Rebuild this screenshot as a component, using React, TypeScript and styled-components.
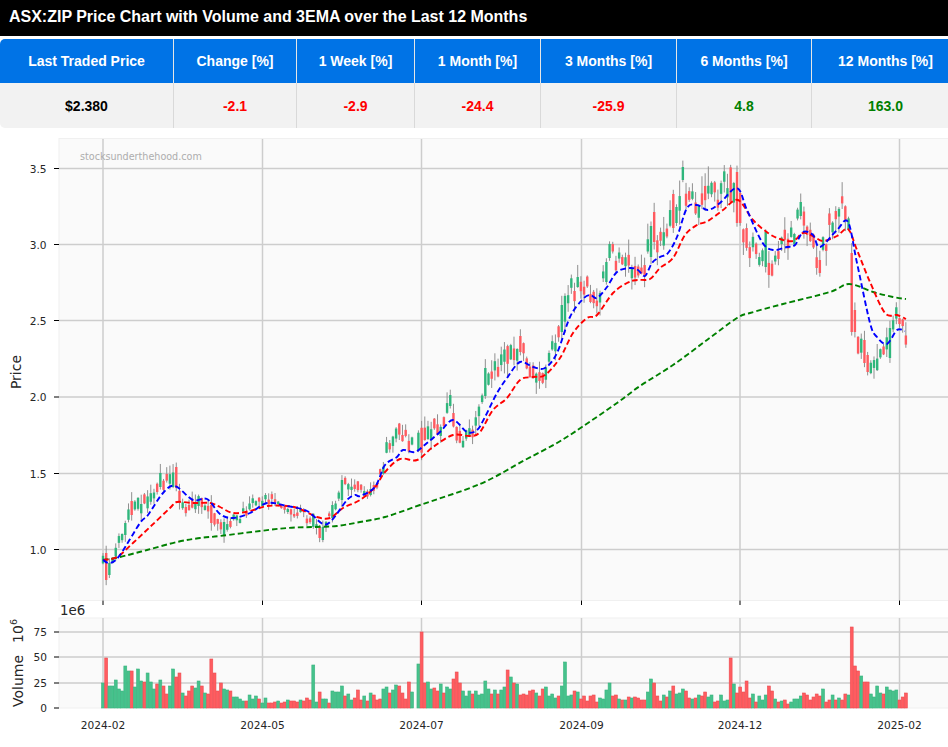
import React from 'react';
import styled, { createGlobalStyle } from 'styled-components';

const GlobalStyle = createGlobalStyle`
  html, body {
    margin: 0;
    padding: 0;
    background: #fff;
    overflow: hidden;
    font-family: "Liberation Sans", Arial, sans-serif;
  }
`;

const Page = styled.div`
  display: flex;
  flex-direction: column;
  width: 948px;
  height: 747px;
  overflow: hidden;
`;

const Title = styled.h1`
  margin: 0 0 3px;
  height: 36px;
  padding: 0 0 3px 9px;
  box-sizing: border-box;
  background: #000;
  color: #fff;
  font-size: 16px;
  font-weight: 700;
  line-height: 33px;
  letter-spacing: -0.01px;
`;

const TableClip = styled.div`
  width: 948px;
  height: 89px;
  overflow: hidden;
  flex: none;
`;

const StatsTable = styled.table`
  width: 959px;
  height: 89px;
  border-collapse: separate;
  border-spacing: 0;
  table-layout: fixed;
  border-radius: 5px 0 0 5px;
  overflow: hidden;
  font-size: 14px;
  font-weight: 700;
`;

const StatsCol = styled.col<{ $width: number }>`
  width: ${(p) => p.$width}px;
`;

const HeadCell = styled.th`
  height: 44px;
  padding: 0;
  background: #0073e6;
  color: #fff;
  text-align: center;
  border-right: 1px solid #e6e6e6;
  &:last-child {
    border-right: none;
  }
`;

const ValueCell = styled.td<{ $tone: string }>`
  height: 45px;
  padding: 0;
  background: #f2f2f2;
  color: ${(p) => p.$tone};
  text-align: center;
  border-right: 1px solid #d9d9d9;
  &:last-child {
    border-right: none;
  }
`;

const PriceSvg = styled.svg`
  display: block;
  width: 948px;
  height: 476px;
  overflow: visible;
`;

const VolumeSvg = styled.svg`
  display: block;
  width: 948px;
  height: 143px;
`;

const AxesBg = styled.rect`
  fill: #fafafa;
  stroke: #f0f0f0;
  stroke-width: 1;
`;

const GridLine = styled.line`
  stroke: #cdcdcd;
  stroke-width: 1.5;
`;

const TickMark = styled.line`
  stroke: #000;
  stroke-width: 1;
`;

const TickLabel = styled.text`
  font-family: "DejaVu Sans", sans-serif;
  font-size: 10.6px;
  fill: #262626;
`;

const AxisTitle = styled.text`
  font-family: "DejaVu Sans", sans-serif;
  font-size: 14px;
  fill: #262626;
`;

const Multiplier = styled(AxisTitle)`
  font-size: 13.4px;
`;

const Watermark = styled.text`
  font-family: "DejaVu Sans", sans-serif;
  font-size: 9.6px;
  fill: #adadad;
`;

const Wick = styled.line`
  stroke: #8f8f8f;
  stroke-width: 1;
`;

const Body = styled.rect<{ $up: boolean }>`
  fill: ${(p) => (p.$up ? '#2fb67c' : '#ff5a5f')};
`;

const VolumeBar = styled.rect<{ $up: boolean }>`
  fill: ${(p) => (p.$up ? '#46c28c' : '#ff5c60')};
  stroke: ${(p) => (p.$up ? '#38b47e' : '#ec4c50')};
  stroke-width: 0.6;
`;

const EmaLine = styled.path<{ $color: string }>`
  fill: none;
  stroke: ${(p) => p.$color};
  stroke-width: 1.9;
  stroke-dasharray: 5.6 3;
`;

const columns = [
  { label: 'Last Traded Price', value: '$2.380', tone: '#000', width: 174 },
  { label: 'Change [%]', value: '-2.1', tone: '#f00', width: 123 },
  { label: '1 Week [%]', value: '-2.9', tone: '#f00', width: 118 },
  { label: '1 Month [%]', value: '-24.4', tone: '#f00', width: 126 },
  { label: '3 Months [%]', value: '-25.9', tone: '#f00', width: 136 },
  { label: '6 Months [%]', value: '4.8', tone: 'green', width: 135 },
  { label: '12 Months [%]', value: '163.0', tone: 'green', width: 147 },
];

// volume in millions, positive = up day, negative = down day, 0 = no bar
const volumes = [
  25, -50, 22, 22, 28, 19, 17, 42, 37, -37, 21, 39, 27, -26, 35, 26, 19, -24, 28, -22, -14, 22, 39, -31, -35, 15,
  -12, -17, -22, 20, 27, -22, 15, -14, -49, -35, -17, -25, 19, 18, -17, 11, 11, 9, 7, -7, 13, 9, 12, -9, 5, 10, -5,
  -5, -6, 7, -5, -6, 8, -7, -7, -6, 8, -7, -10, -8, 43, 6, -16, 9, 9, -5, 17, 16, 16, 22, -12, 14, 8, -10, -18, -8,
  12, -7, 15, -13, -8, -9, 19, 21, -15, 18, 23, -22, -15, -9, -26, 16, 0, 44, -76, -25, 26, 19, -20, -17, 24, -15,
  21, 19, -29, -36, -25, 17, 12, 17, -14, 17, 13, 14, 27, 19, -14, 18, -14, 18, 21, -38, 31, -25, 24, -13, -14, -13,
  -17, -18, 15, -12, -19, 21, 12, 14, 10, -12, 22, 46, 12, 13, -17, 16, -9, -12, -7, -12, -13, -6, 10, 9, 18, 25,
  -12, -13, 9, -8, 8, -11, 10, -11, -10, -8, -8, 16, 29, -25, -12, -7, 13, -11, 17, -22, 14, 15, 19, -17, -10, 9,
  -10, 13, -12, -16, 11, 13, -6, -7, 13, 7, 8, -50, 24, -15, -21, -16, -27, -10, 14, -6, 12, 8, 13, -22, -17, 9, -6,
  7, -8, -4, 6, 9, 9, 12, -15, -13, -8, -11, -14, -12, 19, -6, -8, 13, -8, 10, -8, -14, 13, -81, -42, -37, 32, -26,
  -26, 14, 11, 22, 15, -14, 21, 18, 17, 18, -8, -11, -15,
];

type Pt = [number, number];

const pricePath: Pt[] = [
  [103, 563], [107, 567], [112, 566], [116, 547], [122, 533], [127, 517], [131, 510], [138, 508], [150, 497],
  [160, 480], [172, 478], [177, 480], [180, 507], [190, 508], [198, 498], [212, 513], [222, 530], [232, 522],
  [245, 513], [258, 500], [268, 498], [285, 507], [295, 515], [305, 515], [315, 527], [322, 533], [332, 512],
  [343, 485], [355, 488], [362, 490], [372, 495], [380, 478], [387, 450], [395, 430], [403, 433], [410, 450],
  [420, 437], [432, 430], [445, 422], [450, 402], [456, 430], [463, 443], [472, 433], [480, 412], [486, 383],
  [495, 373], [505, 363], [515, 347], [522, 347], [528, 363], [537, 380], [545, 370], [552, 343], [562, 330],
  [566, 297], [575, 287], [585, 280], [595, 300], [600, 297], [607, 267], [612, 253], [622, 263], [632, 267],
  [643, 280], [650, 240], [655, 250], [660, 247], [670, 227], [675, 207], [683, 187], [690, 193], [700, 207],
  [710, 200], [720, 190], [730, 182], [737, 180], [740, 210], [745, 243], [752, 250], [762, 263], [770, 263],
  [778, 257], [785, 240], [795, 233], [800, 210], [805, 230], [815, 253], [820, 263], [825, 240], [835, 217],
  [845, 207], [848, 210], [851, 292], [855, 320], [858, 350], [863, 347], [868, 363], [875, 363], [880, 355],
  [885, 353], [890, 340], [895, 317], [900, 320], [903, 327], [906, 342],
];

// candles that stand out in the chart: [x, top, bottom, up]
const notable: [number, number, number, boolean][] = [
  [107, 553, 580, false], [109, 563, 575, true], [125, 523, 535, true], [132, 501, 515, false],
  [160, 473, 487, true], [177, 467, 488, false], [212, 505, 523, false], [224, 522, 535, true],
  [320, 527, 538, false], [323, 527, 540, true], [332, 505, 518, true], [342, 480, 500, true],
  [450, 395, 406, true], [485, 368, 396, true], [520, 336, 352, false], [562, 305, 332, true],
  [607, 262, 282, true], [610, 244, 258, true], [650, 226, 257, true], [655, 212, 242, false],
  [673, 194, 228, false], [677, 207, 223, true], [683, 167, 180, true], [737, 172, 223, false],
  [740, 193, 223, false], [767, 232, 267, true], [800, 202, 216, true], [820, 260, 273, false],
  [851, 253, 332, false], [854, 310, 332, false], [864, 340, 363, false], [868, 355, 372, false],
  [890, 328, 358, true],
];

const emaBlue: Pt[] = [
  [103, 560], [110, 563], [120, 555], [140, 523], [148, 515], [163, 493], [175, 486], [193, 500], [207, 499],
  [220, 514], [233, 518], [250, 513], [267, 503], [287, 506], [307, 511], [323, 524], [332, 520], [347, 500],
  [355, 495], [360, 496], [375, 487], [385, 465], [397, 457], [403, 450], [415, 452], [427, 443], [440, 432],
  [453, 420], [467, 432], [477, 430], [485, 417], [497, 393], [507, 378], [520, 362], [533, 367], [545, 368],
  [557, 353], [570, 317], [582, 300], [590, 295], [597, 298], [607, 287], [617, 272], [630, 268], [638, 270],
  [645, 276], [652, 263], [660, 257], [668, 253], [677, 237], [687, 208], [697, 205], [708, 210], [720, 203],
  [737, 188], [747, 210], [762, 242], [773, 250], [787, 247], [795, 245], [803, 232], [813, 235], [820, 247],
  [837, 230], [848, 222], [857, 263], [870, 323], [877, 337], [887, 344], [897, 330], [905, 331],
];

const emaRed: Pt[] = [
  [103, 560], [117, 557], [133, 543], [150, 527], [170, 508], [177, 502], [193, 503], [210, 503], [220, 507],
  [233, 513], [250, 511], [267, 506], [287, 506], [300, 509], [317, 517], [330, 518], [343, 508], [360, 500],
  [375, 487], [385, 472], [400, 459], [417, 460], [433, 447], [453, 435], [470, 436], [480, 432], [493, 410],
  [507, 398], [520, 380], [533, 377], [545, 375], [560, 358], [573, 333], [587, 318], [597, 315], [613, 293],
  [627, 283], [637, 280], [650, 279], [660, 268], [673, 258], [685, 235], [697, 225], [708, 221], [723, 210],
  [738, 200], [753, 220], [768, 233], [780, 239], [793, 241], [803, 233], [813, 236], [823, 241], [837, 236],
  [848, 229], [857, 250], [870, 282], [885, 313], [897, 315], [906, 319],
];

const emaGreen: Pt[] = [
  [103, 560], [120, 557], [147, 550], [177, 542], [200, 538], [220, 536], [260, 531], [287, 528], [313, 527],
  [337, 526], [360, 522], [385, 517], [420, 505], [480, 484], [525, 460], [557, 443], [582, 427], [617, 403],
  [640, 386], [673, 365], [707, 340], [737, 318], [750, 313], [783, 304], [830, 292], [849, 284], [873, 292],
  [893, 297], [906, 299],
];

// catmull-rom through the traced points, the EMAs are smooth curves
const toCurve = (pts: Pt[]) => {
  let d = `M${pts[0][0]} ${pts[0][1]}`;
  for (let i = 0; i < pts.length - 1; i++) {
    const p0 = pts[Math.max(i - 1, 0)];
    const p1 = pts[i];
    const p2 = pts[i + 1];
    const p3 = pts[Math.min(i + 2, pts.length - 1)];
    const c1x = p1[0] + (p2[0] - p0[0]) / 6;
    const c1y = p1[1] + (p2[1] - p0[1]) / 6;
    const c2x = p2[0] - (p3[0] - p1[0]) / 6;
    const c2y = p2[1] - (p3[1] - p1[1]) / 6;
    d += `C${c1x.toFixed(1)} ${c1y.toFixed(1)} ${c2x.toFixed(1)} ${c2y.toFixed(1)} ${p2[0]} ${p2[1]}`;
  }
  return d;
};

const pathY = (x: number) => {
  for (let i = 1; i < pricePath.length; i++) {
    if (x <= pricePath[i][0]) {
      const [x0, y0] = pricePath[i - 1];
      const [x1, y1] = pricePath[i];
      return y0 + ((y1 - y0) * (x - x0)) / (x1 - x0);
    }
  }
  return pricePath[pricePath.length - 1][1];
};

// small repeatable noise so the candles stay the same on every render
let seed = 41;
const rand = () => {
  seed = (seed * 16807) % 2147483647;
  return (seed % 1000) / 1000;
};

const barX = (i: number) => 103 + i * 3.186;

const candles = volumes.map((v, i) => {
  const x = barX(i);
  const scale = 0.6 + (560 - pathY(x)) / 330;
  const mid = pathY(x) + (rand() - 0.5) * 14 * scale;
  const height = (1 + rand() * 4 + Math.abs(v) * 0.32) * scale;
  const top = mid - height / 2;
  const up = rand();
  const down = rand();
  const candle = {
    x,
    up: v > 0,
    top,
    height,
    high: top - (0.5 + up * up * 12) * scale,
    low: top + height + (0.5 + down * down * 10) * scale,
    skip: v === 0,
  };
  const known = notable.find((n) => Math.round((n[0] - 103) / 3.186) === i);
  if (known) {
    candle.top = known[1];
    candle.height = known[2] - known[1];
    candle.up = known[3];
    candle.high = known[1] - 2 - up * 8;
    candle.low = known[2] + 2 + down * 6;
  }
  return candle;
});

const gridX = [103, 262.5, 421.5, 581.5, 740, 899.5];
const priceTicks: [string, number][] = [
  ['3.5', 168.5], ['3.0', 244.5], ['2.5', 320.5], ['2.0', 397], ['1.5', 473.5], ['1.0', 549.5],
];
const volumeTicks: [string, number][] = [['75', 632], ['50', 657], ['25', 683], ['0', 708]];
const dateLabels = ['2024-02', '2024-05', '2024-07', '2024-09', '2024-12', '2025-02'];

function PriceChart() {
  return (
    <PriceSvg viewBox="0 128 948 476">
      <AxesBg x={59} y={138.5} width={900} height={462} />
      {gridX.map((x) => (
        <GridLine key={x} x1={x} x2={x} y1={139} y2={600} />
      ))}
      {priceTicks.map(([label, y]) => (
        <g key={label}>
          <GridLine x1={59} x2={948} y1={y} y2={y} />
          <TickMark x1={54} x2={59} y1={y} y2={y} />
          <TickLabel x={46.5} y={y + 4} textAnchor="end">{label}</TickLabel>
        </g>
      ))}
      {gridX.map((x) => (
        <TickMark key={x} x1={x} x2={x} y1={600.5} y2={605} />
      ))}
      <Watermark x={80} y={160}>stocksunderthehood.com</Watermark>
      <AxisTitle transform="translate(21 372) rotate(-90)" textAnchor="middle">Price</AxisTitle>
      {candles.map((c) =>
        c.skip ? null : (
          <g key={c.x}>
            <Wick x1={c.x} x2={c.x} y1={c.high} y2={c.low} />
            <Body $up={c.up} x={c.x - 1.2} y={c.top} width={2.4} height={c.height} />
          </g>
        ),
      )}
      <EmaLine $color="green" d={toCurve(emaGreen)} />
      <EmaLine $color="#f00" d={toCurve(emaRed)} />
      <EmaLine $color="#00f" d={toCurve(emaBlue)} />
    </PriceSvg>
  );
}

function VolumeChart() {
  return (
    <VolumeSvg viewBox="0 604 948 143">
      <AxesBg x={59} y={618} width={900} height={90} />
      {gridX.map((x) => (
        <GridLine key={x} x1={x} x2={x} y1={618} y2={708} />
      ))}
      {volumeTicks.map(([label, y]) => (
        <g key={label}>
          {label !== '0' && <GridLine x1={59} x2={948} y1={y} y2={y} />}
          <TickMark x1={54} x2={59} y1={y} y2={y} />
          <TickLabel x={47} y={y + 4} textAnchor="end">{label}</TickLabel>
        </g>
      ))}
      <Multiplier x={60} y={615}>1e6</Multiplier>
      <AxisTitle transform="translate(23 707) rotate(-90)">
        Volume<tspan dx={12}>10</tspan><tspan dx={0} dy={-6} fontSize={9.5}>6</tspan>
      </AxisTitle>
      {volumes.map((v, i) =>
        v === 0 ? null : (
          <VolumeBar key={i} $up={v > 0} x={barX(i) - 1.45} y={708 - Math.abs(v)} width={2.9} height={Math.abs(v)} />
        ),
      )}
      {dateLabels.map((label, i) => (
        <TickLabel key={label} x={gridX[i]} y={729} textAnchor="middle">{label}</TickLabel>
      ))}
    </VolumeSvg>
  );
}

export default function App() {
  return (
    <Page>
      <GlobalStyle />
      <Title>ASX:ZIP Price Chart with Volume and 3EMA over the Last 12 Months</Title>
      <TableClip>
        <StatsTable>
          <colgroup>
            {columns.map((c) => (
              <StatsCol key={c.label} $width={c.width} />
            ))}
          </colgroup>
          <thead>
            <tr>
              {columns.map((c) => (
                <HeadCell key={c.label}>{c.label}</HeadCell>
              ))}
            </tr>
          </thead>
          <tbody>
            <tr>
              {columns.map((c) => (
                <ValueCell key={c.label} $tone={c.tone}>{c.value}</ValueCell>
              ))}
            </tr>
          </tbody>
        </StatsTable>
      </TableClip>
      <PriceChart />
      <VolumeChart />
    </Page>
  );
}
